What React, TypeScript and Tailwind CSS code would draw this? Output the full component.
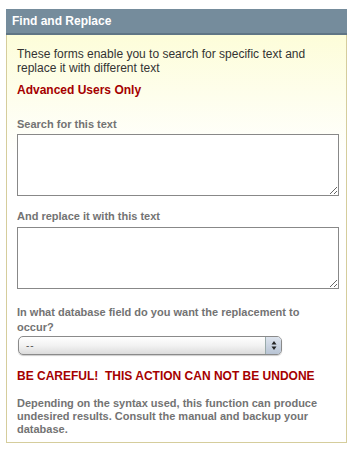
export default function App() {
  return (
    <div className="h-[453px] w-[356px] bg-white pt-[9px] pl-[6px] font-['Liberation_Sans',Arial,sans-serif]">
      <div className="w-[341px] border-x border-b border-[#d5cd9c]">
        <div className="-mx-px h-[26px] border-b-[2px] border-[#5f7585] bg-[#758c9c] pt-[1px] pl-[6px] text-[12px] leading-[23px] font-bold text-white">
          Find and Replace
        </div>
        <div className="bg-gradient-to-b from-[#fdfdd9] to-white to-[30%] px-[10px] pt-[12px] pb-[6px]">
          <p className="text-[12px] leading-[14px] text-[#333]">
            These forms enable you to search for specific text and replace it with different text
          </p>
          <p className="mt-[8px] text-[12px] leading-[14px] font-bold text-[#a50000]">
            Advanced Users Only
          </p>

          <label className="mt-[21px] block text-[11px] leading-[13px] font-bold text-[#737373]">
            Search for this text
          </label>
          <textarea className="mt-[3px] block h-[62px] w-[322px] border border-[#888] bg-white" />

          <label className="mt-[14px] block text-[11px] leading-[13px] font-bold text-[#737373]">
            And replace it with this text
          </label>
          <textarea className="mt-[4px] block h-[62px] w-[322px] border border-[#888] bg-white" />

          <label className="mt-[16px] block text-[11px] leading-[15px] font-bold text-[#737373]">
            In what database field do you want the replacement to occur?
          </label>
          <div className="mt-[1px] ml-px flex h-[19px] w-[264px] overflow-hidden rounded-[5px] border border-[#8a8a8a] bg-gradient-to-b from-white via-[#f2f2f2] to-[#dcdcdc] shadow-[0_1px_1px_rgba(0,0,0,0.2)]">
            <span className="flex-1 pl-[7px] text-[10px] leading-[17px] tracking-[1px] text-[#555]">--</span>
            <span className="flex w-[16px] flex-col items-center justify-center border-l border-[#9aa] bg-gradient-to-b from-[#dde4ee] to-[#b8c4d4]">
              <svg width="6" height="11" viewBox="0 0 6 11">
                <path d="M3 1 L5.5 4.5 H0.5 Z" fill="#222" />
                <path d="M3 10 L5.5 6.5 H0.5 Z" fill="#222" />
              </svg>
            </span>
          </div>

          <p className="mt-[14px] text-[12px] leading-[14px] font-bold text-[#a50000]">
            BE CAREFUL!&nbsp; THIS ACTION CAN NOT BE UNDONE
          </p>
          <p className="mt-[14px] text-[11px] leading-[13px] font-bold text-[#737373]">
            Depending on the syntax used, this function can produce undesired results. Consult the manual and backup your database.
          </p>
        </div>
      </div>
    </div>
  );
}
